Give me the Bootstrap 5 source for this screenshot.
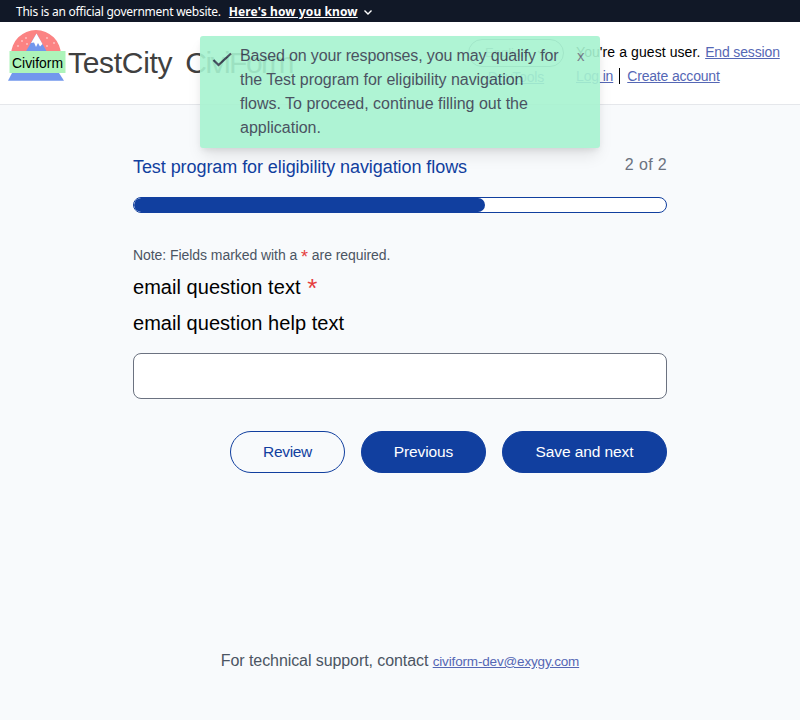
<!DOCTYPE html>
<html lang="en">
<head>
<meta charset="utf-8">
<meta name="viewport" content="width=device-width, initial-scale=1">
<title>Test program for eligibility navigation flows</title>
<link href="https://cdn.jsdelivr.net/npm/bootstrap@5.3.0/dist/css/bootstrap.min.css" rel="stylesheet">
<style>
body{font-family:"Liberation Sans",Arial,sans-serif;background:#f8fafc;color:#000;font-size:16px;line-height:24px;min-height:720px;overflow:hidden}
a:not(.btn){color:#5567b5}
.t{white-space:nowrap}
.gov-banner{height:22px;padding-top:1px;background:#111827;color:#fff;font:12px/21px "Noto Sans",sans-serif;letter-spacing:-.26px}
.gov-banner button{font-size:12px;line-height:21px;text-decoration:underline;letter-spacing:.1px}
.site-header{height:83px;border-bottom:1px solid #e5e7eb}
.logo{margin-right:2px}
.brand-name{font-size:30px;line-height:36px;color:#404040;letter-spacing:-.3px;word-spacing:5px;padding-top:15px}
.brand-name span{letter-spacing:-1.55px}
.lang-block{padding-top:17px;margin-right:12px}
.lang-pill{width:96px;height:28px;border:1px solid #6b7280;font-size:13px;color:#6b7280}
.tools{display:block;font-size:14px;line-height:20px;letter-spacing:-.15px}
.account{width:208px;font-size:14px;letter-spacing:-.15px;padding-top:18px}
.guest{letter-spacing:.08px;margin-right:1px}
.divider{width:1px;height:16px;background:#000;margin:0 7px 0 6px}
.create{letter-spacing:-.18px}
.notice{left:200px;top:36px;width:400px;height:112px;background:#a7f3d0;color:#374151;opacity:.9;border-radius:3px;box-shadow:0 10px 15px -3px rgba(0,0,0,.1),0 4px 6px -2px rgba(0,0,0,.1);z-index:5}
.notice-text{width:329px}
.line-1{letter-spacing:-.14px}
.line-2{letter-spacing:-.04px}
.dismiss{margin-left:8px;color:#6b7280;font-size:15px}
.form-area{width:534px;padding-top:46px}
.program-title{font-size:18px;line-height:28px;color:#113f9f;letter-spacing:-.07px;margin:2px 0 16px}
.step-count{color:#6b7280;letter-spacing:.35px;padding-top:2px}
.meter{height:16px;border:1px solid #113f9f;border-radius:8px;background:#fff}
.meter .progress-bar{background:#113f9f;border-radius:8px;width:66%}
.req-note{font-size:14px;line-height:20px;color:#4b5563;padding-top:32px;letter-spacing:-.06px}
.star{color:#e53e3e}
.req-note .star{font-size:18px;line-height:14px;vertical-align:-3px}
.question{font-size:20px;line-height:28px;letter-spacing:.04px}
.question .star{font-size:26px;line-height:20px;vertical-align:-3px;margin-left:1px}
.email-field{height:46px;border:1px solid #6b7280;border-radius:8px}
.btn-pill{height:42px;border-radius:21px;border:1px solid #113f9f;font-size:15.5px;line-height:24px;padding:8px 0;color:#113f9f;letter-spacing:-.1px}
.btn-solid{background:#113f9f;color:#fff}
.w-review{width:115px;letter-spacing:-.3px}
.w-previous{width:125px}
.w-next{width:165px}
.support{color:#4b5563;margin-top:176px;letter-spacing:-.08px}
.support a{font-size:13.5px;letter-spacing:-.16px}
</style>
<script src="https://cdn.jsdelivr.net/npm/bootstrap@5.3.0/dist/js/bootstrap.bundle.min.js"></script>
</head>
<body>
<div class="gov-banner d-flex align-items-center px-3">
  <span class="t">This is an official government website.</span>
  <button class="btn p-0 border-0 rounded-0 text-white fw-bold ms-2 t">Here's how you know</button>
  <svg class="ms-1" width="12" height="12" viewBox="0 0 12 12" fill="none" stroke="#fff" stroke-width="1.4"><path d="M2.500 4.500 6 8 9.500 4.500"/></svg>
</div>
<header class="site-header bg-white d-flex">
  <div class="d-flex align-items-start ps-2 pt-2 flex-grow-1">
    <svg class="logo" width="58" height="52" viewBox="0 0 58 52" role="img" aria-label="Civiform">
      <path d="M3 25a25 25 0 0 1 50 0z" fill="#fb8383"/>
      <path d="M17.500 22 28.500 3.500 39 22z" fill="#7297ed"/>
      <path d="m23 13 5.500-9.500 6 10.500-2.500 2.500-2-3.500-2 4-2-4.500z" fill="#fff"/>
      <g fill="#fff" fill-opacity=".85"><circle cx="14" cy="11" r=".8"/><circle cx="19" cy="14" r=".8"/><circle cx="10" cy="16" r=".8"/><circle cx="18" cy="8" r=".8"/><circle cx="39" cy="8" r=".8"/><circle cx="46" cy="13" r=".8"/><circle cx="39" cy="16" r=".8"/></g>
      <path d="M4 43h47l5 7.700H0z" fill="#7297ed"/>
      <path d="M1.500 21h56v22h-56z" fill="#adf4b9"/>
      <text x="4" y="38" font-size="14.500" textLength="51" lengthAdjust="spacingAndGlyphs">Civiform</text>
    </svg>
    <span class="brand-name t">TestCity <span>CiviForm</span></span>
  </div>
  <div class="lang-block text-center">
    <div class="lang-pill rounded-pill d-flex align-items-center justify-content-between px-3"><span>English</span>
      <svg width="10" height="10" viewBox="0 0 10 10" fill="none" stroke="#6b7280" stroke-width="1.500"><path d="m1 3 4 4 4-4"/></svg></div>
    <a href="#" class="tools t">DevTools</a>
  </div>
  <div class="account t me-3">
    <div><span class="guest">You're a guest user.</span> <a href="#">End session</a></div>
    <div class="d-flex align-items-center"><a href="#">Log in</a><i class="divider"></i><a href="#" class="create">Create account</a></div>
  </div>
</header>
<div class="notice position-absolute d-flex py-2" role="alert">
  <svg class="ms-2 mt-1" width="28" height="24" viewBox="0 0 28 24" fill="none" stroke="#374151" stroke-width="2.200"><path d="m5.500 12 5 5L23 5.500"/></svg>
  <div class="notice-text ms-1 t"><span class="line-1">Based on your responses, you may qualify for</span><br><span class="line-2">the Test program for eligibility navigation</span><br>flows. To proceed, continue filling out the<br>application.</div>
  <span class="dismiss">x</span>
</div>
<main class="form-area mx-auto">
  <div class="d-flex justify-content-between"><h1 class="program-title fw-normal t">Test program for eligibility navigation flows</h1><span class="step-count t">2 of 2</span></div>
  <div class="progress meter"><div class="progress-bar"></div></div>
  <p class="req-note mb-2">Note: Fields marked with a <span class="star">*</span> are required.</p>
  <label class="question d-block mb-2" for="email">email question text <span class="star">*</span></label>
  <div class="question mb-3">email question help text</div>
  <input id="email" class="form-control email-field" type="email">
  <div class="d-flex justify-content-end gap-3 mt-4 pt-2"><a class="btn btn-pill w-review">Review</a><a class="btn btn-pill btn-solid w-previous">Previous</a><a class="btn btn-pill btn-solid w-next">Save and next</a></div>
  <footer class="support text-center">For technical support, contact <a href="#">civiform-dev@exygy.com</a></footer>
</main>
</body>
</html>
